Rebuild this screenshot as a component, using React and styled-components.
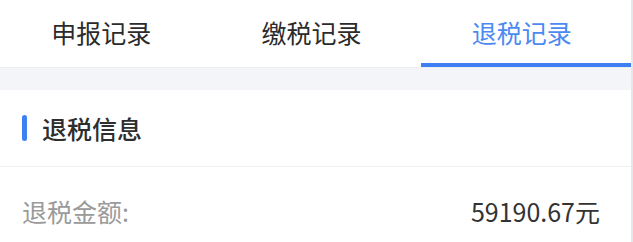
import React, { useState } from 'react';
import styled, { createGlobalStyle } from 'styled-components';

const GlobalStyle = createGlobalStyle`
  html, body {
    margin: 0;
    padding: 0;
    background: #ffffff;
    overflow: hidden;
  }
  body {
    font-family: "Noto Sans CJK SC", "Noto Sans", "Liberation Sans", sans-serif;
  }
`;

const Page = styled.div`
  box-sizing: border-box;
  width: 100%;
  height: 242px;
  overflow: hidden;
  border-right: 2px solid #e6e7ea;
  background: #ffffff;
`;

const TabBar = styled.div`
  display: grid;
  grid-template-columns: repeat(3, 1fr);
  height: 67px;
  border-bottom: 1px solid #ebedf0;
  background: #ffffff;
`;

const Tab = styled.div`
  display: flex;
  align-items: center;
  justify-content: center;
  padding-right: 8px;
  font-size: 25px;
  color: ${p => (p.active ? '#4b8af2' : '#2b2b2b')};
  border-bottom: 4px solid ${p => (p.active ? '#3d7ff0' : 'transparent')};
  box-sizing: border-box;
  cursor: pointer;
`;

const Gap = styled.div`
  height: 22px;
  background: #f4f5f8;
`;

const Card = styled.div`
  background: #ffffff;
`;

const SectionHead = styled.div`
  display: flex;
  align-items: center;
  gap: 15px;
  height: 76px;
  padding: 0 22px;
  border-bottom: 1px solid #eeeff1;
`;

const Mark = styled.span`
  width: 5px;
  height: 26px;
  border-radius: 3px;
  background: #3d80f2;
`;

const SectionTitle = styled.span`
  font-size: 25px;
  font-weight: 500;
  color: #2e2e2e;
`;

const Row = styled.div`
  display: flex;
  justify-content: space-between;
  align-items: center;
  padding: 26px 31px 13px 22px;
  font-size: 25px;
`;

const Label = styled.span`
  color: #9a9a9a;
`;

const Value = styled.span`
  color: #333333;
`;

const tabs = ['申报记录', '缴税记录', '退税记录'];

export default function App() {
  const [current, setCurrent] = useState(2);
  return (
    <>
      <GlobalStyle />
      <Page>
        <TabBar>
          {tabs.map((t, i) => (
            <Tab key={t} active={i === current} onClick={() => setCurrent(i)}>
              {t}
            </Tab>
          ))}
        </TabBar>
        <Gap />
        <Card>
          <SectionHead>
            <Mark />
            <SectionTitle>退税信息</SectionTitle>
          </SectionHead>
          <Row>
            <Label>退税金额:</Label>
            <Value>59190.67元</Value>
          </Row>
        </Card>
      </Page>
    </>
  );
}
